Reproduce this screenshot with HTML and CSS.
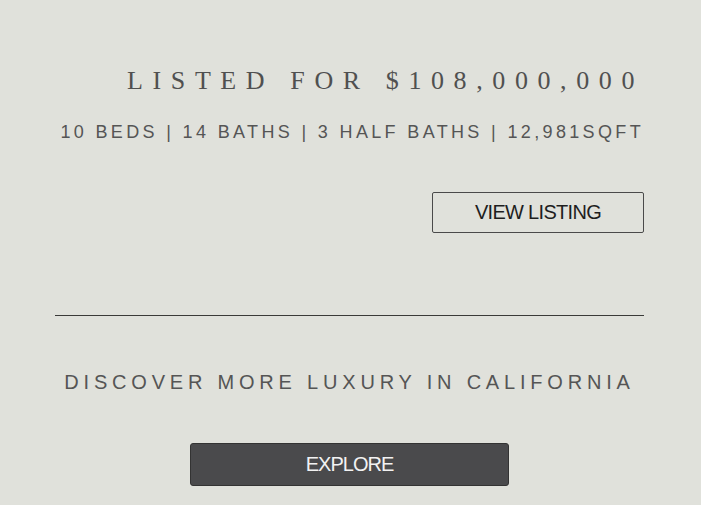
FILE: index.html
```html
<!DOCTYPE html>
<html>
<head>
<meta charset="utf-8">
<link rel="stylesheet" href="styles.css">
</head>
<body>
<main class="page">
  <section class="listing">
    <h1 class="price">LISTED FOR $108,000,000</h1>
    <p class="stats">10 BEDS | 14 BATHS | 3 HALF BATHS | 12,981SQFT</p>
    <a class="btn-outline" href="#">VIEW LISTING</a>
  </section>
  <hr class="divider">
  <section class="discover">
    <h2 class="discover-title">DISCOVER MORE LUXURY IN CALIFORNIA</h2>
    <a class="btn-dark" href="#">EXPLORE</a>
  </section>
</main>
</body>
</html>
```
FILE: styles.css
```css
html, body {
  margin: 0;
  padding: 0;
}
body {
  background: #e0e1db;
  width: 701px;
  height: 505px;
  overflow: hidden;
}
.page {
  width: 589px;
  margin-left: 55px;
  display: flex;
  flex-direction: column;
}
.listing {
  display: flex;
  flex-direction: column;
  align-items: flex-end;
}
.price {
  margin: 64px 0 0 0;
  font-family: "Liberation Serif", "Times New Roman", serif;
  font-weight: normal;
  font-size: 26px;
  line-height: 34px;
  letter-spacing: 9.6px;
  color: #505050;
}
.stats {
  margin: 23px 0 0 0;
  font-family: "Liberation Sans", Arial, sans-serif;
  font-size: 18px;
  line-height: 22px;
  letter-spacing: 3.35px;
  color: #555555;
}
.btn-outline {
  margin-top: 49px;
  box-sizing: border-box;
  width: 212px;
  height: 41px;
  border: 1px solid #4a4a4a;
  border-radius: 2px;
  display: flex;
  align-items: center;
  justify-content: center;
  font-family: "Liberation Sans", Arial, sans-serif;
  font-size: 20px;
  letter-spacing: -0.7px;
  color: #1e1e1e;
  text-decoration: none;
}
.divider {
  margin: 82px 0 0 0;
  border: 0;
  height: 1px;
  background: #3a3a38;
  width: 589px;
}
.discover {
  display: flex;
  flex-direction: column;
  align-items: center;
}
.discover-title {
  margin: 54px 0 0 0;
  font-family: "Liberation Sans", Arial, sans-serif;
  font-weight: normal;
  font-size: 20px;
  line-height: 24px;
  letter-spacing: 4.8px;
  color: #555555;
}
.btn-dark {
  margin-top: 49px;
  box-sizing: border-box;
  width: 319px;
  height: 43px;
  background: #4a4a4c;
  border: 1px solid #333;
  border-radius: 3px;
  display: flex;
  align-items: center;
  justify-content: center;
  font-family: "Liberation Sans", Arial, sans-serif;
  font-size: 20px;
  letter-spacing: -1px;
  color: #f2f2f2;
  text-decoration: none;
}
```
